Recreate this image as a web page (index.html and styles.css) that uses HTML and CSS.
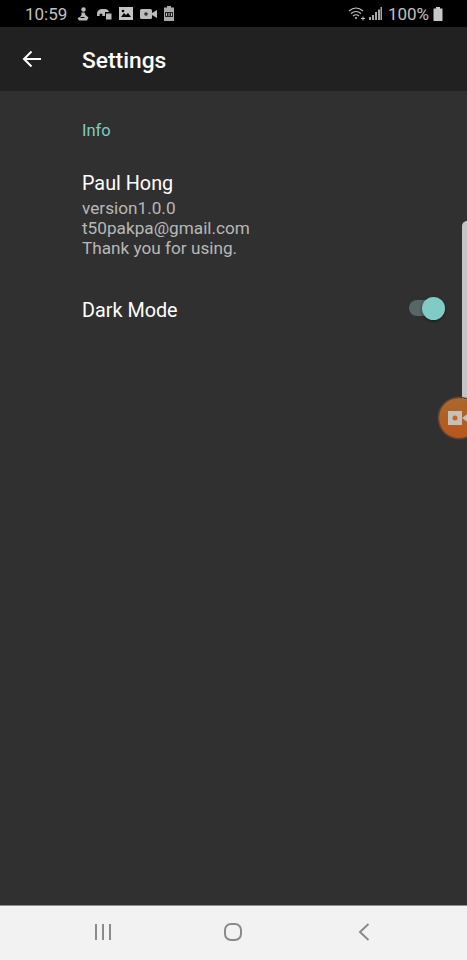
FILE: index.html
```html
<!DOCTYPE html>
<html lang="en">
<head>
<meta charset="utf-8">
<title>Settings</title>
<link rel="stylesheet" href="styles.css">
</head>
<body>
<div class="screen">
  <div class="status">
    <span class="clock">10:59</span>
    <div class="status-icons">
      <svg width="14" height="14" viewBox="0 0 14 14"><circle cx="7.500" cy="2.500" r="2.200" fill="#bbb"/><path d="M5.500 5.500h3l1 2.500 3 2.500-1.500 3H3L1.500 11l2.500-1 1.500-2z" fill="#bbb"/><path d="M4.500 10.500h4" stroke="#000" stroke-width="1"/></svg>
      <svg width="15" height="12" viewBox="0 0 15 12"><path d="M0 8V5q1-4 5-4h3q3 0 4 3H8v4z" fill="#bbb"/><rect x="9" y="5.500" width="5.500" height="6" fill="#bbb"/><circle cx="4" cy="7" r="1.500" fill="#000"/></svg>
      <svg width="14" height="13" viewBox="0 0 14 13"><path d="M0 0h14v13H0z" fill="#c4c4c4"/><path d="M2 10l3-4 2 2 2-2 3 4z" fill="#000"/><circle cx="4" cy="4" r="1.300" fill="#000"/></svg>
      <svg width="17" height="12" viewBox="0 0 17 12"><rect y="1" width="12" height="10" rx="1.500" fill="#bbb"/><path d="M12 5l5-3v8l-5-3z" fill="#bbb"/><circle cx="6" cy="6" r="1.800" fill="#333"/></svg>
      <svg width="10" height="15" viewBox="0 0 10 15"><path d="M3 0h4v1.500h3V15H0V1.500h3z" fill="#aaa"/><rect x="1" y="6" width="8" height="5" fill="#222"/><path d="M2.500 7v3M5 7v3M7.500 7v3" stroke="#bbb" stroke-width="1"/></svg>
    </div>
    <div class="status-right">
      <svg width="18" height="15" viewBox="0 0 18 15" fill="none" stroke="#c4c4c4" stroke-width="1.200"><path d="M1 5q7-6 14 0M3 7.500q5-4 10 0M5 10q3-2.500 6 0"/><circle cx="8" cy="12" r="1" fill="#c4c4c4" stroke="none"/><path d="M13 12.500h4M15 10.500v4" stroke-width="1"/></svg>
      <svg width="13" height="13" viewBox="0 0 13 13" fill="#aaa"><rect x="0" y="10" width="2" height="3"/><rect x="3" y="8" width="2" height="5"/><rect x="6" y="5" width="2" height="8"/><rect x="9" y="2.500" width="2" height="10.500"/><rect x="11.500" y="0" width="1.500" height="13"/></svg>
      <span class="percent">100%</span>
      <svg width="10" height="14" viewBox="0 0 10 14"><path d="M3 0h4v1.500h2.500V14H.500V1.500H3z" fill="#c8c8c8"/></svg>
    </div>
  </div>

  <header class="appbar">
    <svg class="back" width="20" height="18" viewBox="0 0 20 18" fill="none" stroke="#fff" stroke-width="2"><path d="M19 9H2M9.500 1.500 2 9l7.500 7.500"/></svg>
    <h1 class="title">Settings</h1>
  </header>

  <main class="content">
    <div class="section-label">Info</div>
    <div class="info">
      <div class="name">Paul Hong</div>
      <div class="detail">version1.0.0</div>
      <div class="detail">t50pakpa@gmail.com</div>
      <div class="detail">Thank you for using.</div>
    </div>
    <div class="row">
      <span class="row-label">Dark Mode</span>
      <span class="switch"><span class="thumb"></span></span>
    </div>
  </main>

  <div class="edge-handle"></div>
  <div class="float-btn">
    <svg width="22" height="14" viewBox="0 0 22 14"><rect width="14" height="14" fill="#c4c0bc"/><circle cx="7" cy="7" r="2.500" fill="#c7661f"/><path d="M14 7l8-6v12z" fill="#c4c0bc"/></svg>
  </div>

  <nav class="navbar">
    <svg width="18" height="18" viewBox="0 0 18 18" stroke="#8a8a8a" stroke-width="2" fill="none"><path d="M2 1v16M9 1v16M16 1v16"/></svg>
    <svg width="20" height="20" viewBox="0 0 20 20" stroke="#8a8a8a" stroke-width="2" fill="none"><rect x="2" y="2" width="16" height="16" rx="6"/></svg>
    <svg width="12" height="18" viewBox="0 0 12 18" stroke="#8a8a8a" stroke-width="2" fill="none"><path d="M10.500 1 2 9l8.500 8"/></svg>
  </nav>
</div>
</body>
</html>
```
FILE: styles.css
```css
* { box-sizing: border-box; }
html, body { margin: 0; padding: 0; }
body { width: 467px; height: 960px; overflow: hidden; background: #303030; font-family: Roboto, "Liberation Sans", sans-serif; }
.screen { position: relative; width: 467px; height: 960px; display: flex; flex-direction: column; overflow: hidden; background: #303030; }

.status { height: 27px; flex: none; background: #000; color: #c0c0c0; display: flex; align-items: center; padding: 0 24px 0 25px; }
.clock { font-size: 17px; width: 50px; }
.status-icons { display: flex; align-items: center; gap: 7px; margin-left: 1px; }
.status-right { margin-left: auto; display: flex; align-items: center; gap: 3px; }
.percent { font-size: 17px; margin-left: 3px; margin-right: 1px; }

.appbar { height: 64px; flex: none; background: #212121; display: flex; align-items: center; padding-left: 22px; }
.back { flex: none; }
.title { margin: 2px 0 0 40px; font-size: 22.800px; font-weight: 500; color: #fff; }

.content { flex: 1; padding: 31px 22px 0 82px; }
.section-label { font-size: 16.500px; font-weight: 400; color: #80cbc4; line-height: 18px; }
.info { margin-top: 31px; }
.name { font-size: 19.800px; color: #fff; line-height: 26px; margin-bottom: 1px; }
.detail { font-size: 17.200px; color: #b8b8b8; line-height: 20px; }
.row { display: flex; align-items: center; justify-content: space-between; margin-top: 31px; height: 42px; }
.row-label { font-size: 19.800px; color: #fff; }
.switch { position: relative; display: block; width: 36px; height: 16px; border-radius: 8px; background: #566766; margin-top: -4px; }
.thumb { position: absolute; right: 0; top: -3px; width: 23px; height: 23px; border-radius: 50%; background: #80cbc4; box-shadow: 0 1px 3px rgba(0,0,0,.5); }

.edge-handle { position: absolute; left: 462px; top: 221px; width: 8px; height: 184px; border-radius: 5px 0 0 5px; background: #c4c4c4; }
.float-btn { position: absolute; left: 439px; top: 398px; width: 40px; height: 40px; border-radius: 50%; background: linear-gradient(#a9682c, #b9561c); box-shadow: 0 0 0 1.500px #5e4433; display: flex; align-items: center; padding-left: 9px; }

.navbar { height: 55px; flex: none; background: #f2f2f2; border-top: 1px solid #8e8e8e; display: flex; align-items: center; justify-content: space-between; padding: 0 97px 2px 94px; }
.navbar svg:nth-child(2) { margin-right: 5px; }
```
